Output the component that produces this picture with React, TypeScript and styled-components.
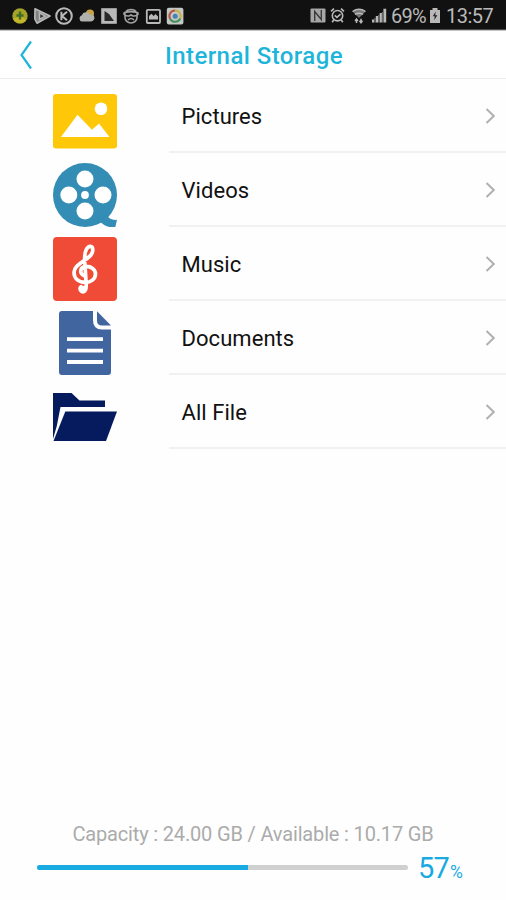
import React from 'react';
import styled, { createGlobalStyle } from 'styled-components';

const GlobalStyle = createGlobalStyle`
  * { box-sizing: border-box; }
  body { margin: 0; background: #fefefe; font-family: Roboto, "Noto Sans", sans-serif; }
  svg { display: block; flex: none; }
`;

const Screen = styled.div`
  width: 506px;
  height: 900px;
  display: flex;
  flex-direction: column;
  background: #fefefe;
  overflow: hidden;
`;

const StatusBar = styled.div`
  height: 30px;
  flex: none;
  display: flex;
  align-items: center;
  justify-content: space-between;
  padding: 2px 13px 0 11px;
  background: #111;
  border-bottom: 1px solid #4a4a4a;
  color: #b9b9b9;
`;

const Notifications = styled.div`
  display: flex;
  gap: 4.2px;
`;

const SystemStatus = styled.div`
  display: flex;
  align-items: center;
`;

const StatusText = styled.span<{ $width: number; $spacing: number }>`
  width: ${(p) => p.$width}px;
  font-size: 20px;
  line-height: 24px;
  letter-spacing: ${(p) => p.$spacing}px;
  white-space: nowrap;
`;

const StatusIcon = styled.span<{ $gap: number }>`
  margin-right: ${(p) => p.$gap}px;
`;

const Header = styled.header`
  height: 49px;
  flex: none;
  display: grid;
  grid-template-columns: 52px 1fr 50px;
  align-items: center;
  border-top: 1px solid #c4c4c4;
  border-bottom: 1px solid #ececec;
  background: #fff;
`;

const BackButton = styled.button`
  border: 0;
  padding: 0 0 0 18px;
  background: none;
`;

const Title = styled.h1`
  margin: 2px 0 0;
  text-align: center;
  font-size: 24px;
  line-height: 28px;
  font-weight: 500;
  letter-spacing: 0.42px;
  color: #1fb5da;
`;

const List = styled.ul`
  margin: 0;
  padding: 0;
  list-style: none;
  flex: 1;
`;

const Row = styled.li`
  display: flex;
  height: 74px;
`;

const Thumb = styled.div`
  width: 169px;
  padding: 10px 0 0 53px;
`;

const RowBody = styled.div`
  flex: 1;
  display: flex;
  align-items: center;
  justify-content: space-between;
  padding: 2px 9px 0 12.5px;
  border-bottom: 2px solid #f1f1f1;
`;

const Label = styled.span`
  padding-top: 2px;
  font-size: 22px;
  line-height: 28px;
  letter-spacing: 0.05px;
  color: #111;
`;

const Footer = styled.footer`
  padding: 0 42px 16px 37px;
`;

const Capacity = styled.p`
  margin: 0 0 4px;
  padding-left: 5px;
  text-align: center;
  font-size: 20px;
  line-height: 24px;
  letter-spacing: -0.16px;
  color: #ababab;
  white-space: nowrap;
`;

const Usage = styled.div`
  display: flex;
  align-items: center;
  height: 34px;
`;

const Track = styled.div`
  width: 371px;
  height: 5px;
  flex: none;
  border-radius: 3px;
  background: #d0d0d0;
  overflow: hidden;
`;

const Fill = styled.div`
  width: 57%;
  height: 100%;
  background: #18abe1;
`;

const Percent = styled.div`
  margin-left: 10px;
  padding-top: 5px;
  display: flex;
  align-items: baseline;
  font-size: 29px;
  font-weight: 400;
  line-height: 34px;
  letter-spacing: -0.8px;
  color: #18abe1;
`;

const PercentSign = styled.span`
  margin-left: 1px;
  font-size: 17.5px;
  font-weight: 400;
`;

const G = '#b9b9b9';

const NotificationIcons = () => (
  <Notifications>
    <svg width="18" height="18" viewBox="0 0 18 18">
      <circle cx="9" cy="9" r="7.7" fill="#a5a32a" />
      <path d="M2 12a7.7 7.7 0 0 0 13 1l-5-4z" fill="#c5b629" />
      <path d="M9 4.5v8M5.5 8.5h7" stroke="#3f6d24" strokeWidth="2.4" />
    </svg>
    <svg width="18" height="18" viewBox="0 0 18 18">
      <path d="M2 1.8 17 9 4 16.2 1.8 12z" fill="#828282" stroke={G} strokeWidth="1.6" strokeLinejoin="round" />
      <path d="m6.5 5.8 5.7 3.4-5.7 3.3z" fill="#333" stroke={G} strokeWidth="1.5" />
    </svg>
    <svg width="18" height="18" viewBox="0 0 18 18" fill="none" stroke={G} strokeWidth="2">
      <circle cx="9" cy="9" r="7.8" />
      <path d="M6.4 4.8v8.4M12 4.8 7 9l5 4.2" />
    </svg>
    <svg width="18" height="18" viewBox="0 0 18 18">
      <circle cx="12" cy="6.5" r="4" fill="#c8a348" />
      <path d="M4 14.4a3.2 3.2 0 0 1-.2-6.2 4.4 4.4 0 0 1 8-.6 3.5 3.5 0 1 1 1.3 6.8z" fill="#b0b0ad" />
    </svg>
    <svg width="18" height="18" viewBox="0 0 18 18">
      <path d="M1.2 1.2h15.6v15.6H1.2z" fill={G} />
      <path d="m4.5 4 4.5 3 2.5 3.5L14 14H4.5z" fill="#2a2a2a" />
    </svg>
    <svg width="18" height="18" viewBox="0 0 18 18" fill="none" stroke="#a2a2a2" strokeWidth="1.6">
      <path d="M4 4.5a5.5 3.5 0 0 1 10 0M1.5 6.5c2-2.5 13-2.5 15 0M3 6.5v4a6 5.5 0 0 0 12 0v-4M1.5 6.5q1.5 3 5.5 2.5L9 8l2 1q4 .5 5.5-2.5M6 13q3-3 6 0" />
    </svg>
    <svg width="18" height="18" viewBox="0 0 18 18">
      <rect x="2.8" y="2.8" width="13.2" height="13.2" rx="1" fill="none" stroke={G} strokeWidth="1.8" />
      <path d="M5 12.6V9l2.4-2.3L9.7 9l1.8-2L14 9.5v3.1z" fill={G} />
    </svg>
    <svg width="18" height="18" viewBox="0 0 18 18">
      <rect x=".8" y=".8" width="16.6" height="16.6" rx="2" fill="#c4c7c5" />
      <g fill="none" strokeWidth="2">
        <path d="M4.2 12A5.6 5.6 0 0 1 9 3.5" stroke="#b95344" />
        <path d="M9 3.5a5.6 5.6 0 0 1 5.2 8" stroke="#c6b144" />
        <path d="M14.2 11.5a5.6 5.6 0 0 1-10 .5" stroke="#45935b" />
      </g>
      <circle cx="9.2" cy="9.2" r="2.5" fill="#4283b4" />
    </svg>
  </Notifications>
);

const PhoneStatus = () => (
  <SystemStatus>
    <StatusIcon $gap={4}>
      <svg width="16" height="17" viewBox="0 0 16 17">
        <rect x=".5" y="1.5" width="15" height="14" rx="1" fill="#a6a6a6" />
        <path d="M4.7 14V4.5l6.6 8V3" fill="none" stroke="#3a3a3a" strokeWidth="1.4" />
      </svg>
    </StatusIcon>
    <StatusIcon $gap={6}>
      <svg width="15" height="17" viewBox="0 0 15 17" fill="none" stroke={G} strokeWidth="1.6">
        <circle cx="7.5" cy="8.7" r="5.2" />
        <path d="m4.8 8.4 2.1 2 3.6-3.3M1 4.3 4 1.6M14 4.3l-3-2.7M3.7 13l-1.5 2.3M11.3 13l1.5 2.3" />
      </svg>
    </StatusIcon>
    <StatusIcon $gap={4}>
      <svg width="16" height="17" viewBox="0 0 16 17">
        <path d="M1.5 4.5Q8 0 14.5 4.5L8 11z" fill="#777" />
        <path d="M1.5 4.5Q8 0 14.5 4.5M4 7.3Q8 5 12 7.3" fill="none" stroke={G} strokeWidth="1.5" />
        <path d="M5.5 16V12M4 13.9l1.5-2 1.5 2M10 11.7v3.6m-1.5-1.6 1.5 2 1.5-2" stroke={G} strokeWidth="1.5" fill="none" />
      </svg>
    </StatusIcon>
    <StatusIcon $gap={4}>
      <svg width="16" height="17" viewBox="0 0 16 17">
        <path d="M1 15.5v-3h2.3v3zM4.8 15.5V9h2.3v6.5zM8.6 15.5V6h2.3v9.5zM12.4 15.5V1.8h2.8v13.7z" fill={G} />
        <path d="M3.3 15.5V11h1.5v4.5zM7.1 15.5V8h1.5v7.5zM10.9 15.5V5h1.5v10.5z" fill="#686868" />
      </svg>
    </StatusIcon>
    <StatusText $width={38} $spacing={-0.75}>69%</StatusText>
    <StatusIcon $gap={5}>
      <svg width="12" height="17" viewBox="0 0 12 17">
        <path d="M3.5 1h5v2H11v13H1V3h2.5z" fill={G} />
        <path d="M6.7 4.5 3.8 9.2h2l-.6 4 3.2-5H6.2z" fill="#222" />
      </svg>
    </StatusIcon>
    <StatusText $width={47} $spacing={-0.5}>13:57</StatusText>
  </SystemStatus>
);

const PictureIcon = () => (
  <svg width="64" height="64" viewBox="0 0 64 64">
    <rect x="0" y="5" width="64" height="54.5" rx="3" fill="#fec809" />
    <circle cx="48" cy="19.8" r="6.3" fill="#fff" />
    <path d="M8 48 24.5 25.8 39 40.8 46 34.5 56.5 48z" fill="#fff" />
  </svg>
);

const VideoIcon = () => (
  <svg width="64" height="64" viewBox="0 0 64 64">
    <circle cx="32" cy="32" r="32" fill="#338db5" />
    <path d="M44 58 54 52q2.5 5.5 10 4.8L62.3 64c-6 1-11-1-14.8-5z" fill="#338db5" />
    <g fill="#fff">
      <circle cx="32" cy="16" r="8.5" />
      <circle cx="15.8" cy="32" r="8.5" />
      <circle cx="50" cy="32" r="8.5" />
      <circle cx="32" cy="48" r="8.5" />
      <circle cx="32" cy="32" r="3.9" />
    </g>
  </svg>
);

const MusicIcon = () => (
  <svg width="64" height="64" viewBox="0 0 64 64">
    <rect width="64" height="64" rx="4" fill="#ef4b36" />
    <path
      d="M30.8 38.5c-4.5-2-4-8.6 1.7-9 5.8-.4 10 3.1 10 7.5 0 5-4.8 8.6-10.3 8.4C25.5 45.2 21 41.5 21 35.2c0-9.5 18.8-12.7 18.8-22 0-5.2-4.2-4.9-6.3-1-2.6 4.8-2.1 10.5-1.5 16l1.2 19.5c.3 6.8-2.5 8-4.8 6.5-1.9-1.3-1.6-3.6-.4-4.5"
      fill="none"
      stroke="#fff"
      strokeWidth="3.7"
      strokeLinecap="round"
      strokeLinejoin="round"
    />
    <circle cx="30" cy="52" r="3.2" fill="#fff" />
  </svg>
);

const DocumentIcon = () => (
  <svg width="64" height="64" viewBox="0 0 64 64">
    <path d="M9 0h31v9.5q0 9 9 9h9V61q0 3-3 3H9q-3 0-3-3V3q0-3 3-3z" fill="#40659f" />
    <path d="M44 .3 58 14.5h-9q-5 0-5-5z" fill="#40659f" />
    <path d="M14 28.2h36M14 39.6h36M14 51h36" stroke="#fff" strokeWidth="3.8" />
  </svg>
);

const FolderIcon = () => (
  <svg width="64" height="64" viewBox="0 0 64 64">
    <path d="M0 8h18.5l8 7.5H52V22H7.5L3.8 41 0 54z" fill="#051b5d" />
    <path d="M12.3 26.5H64L53 56H.5z" fill="#051b5d" />
  </svg>
);

const items = [
  { label: 'Pictures', Icon: PictureIcon },
  { label: 'Videos', Icon: VideoIcon },
  { label: 'Music', Icon: MusicIcon },
  { label: 'Documents', Icon: DocumentIcon },
  { label: 'All File', Icon: FolderIcon },
];

export default function App() {
  return (
    <Screen>
      <GlobalStyle />
      <StatusBar>
        <NotificationIcons />
        <PhoneStatus />
      </StatusBar>
      <Header>
        <BackButton aria-label="Back">
          <svg width="16" height="32" viewBox="0 0 16 32">
            <path d="M13 2.5 3.5 16 13 29.5" fill="none" stroke="#1fb5da" strokeWidth="2.2" />
          </svg>
        </BackButton>
        <Title>Internal Storage</Title>
      </Header>
      <List>
        {items.map(({ label, Icon }) => (
          <Row key={label}>
            <Thumb>
              <Icon />
            </Thumb>
            <RowBody>
              <Label>{label}</Label>
              <svg width="14" height="18" viewBox="0 0 14 18">
                <path d="m3.5 2 7.3 7-7.3 7" fill="none" stroke="#b0b0b0" strokeWidth="2" />
              </svg>
            </RowBody>
          </Row>
        ))}
      </List>
      <Footer>
        <Capacity>Capacity : 24.00 GB / Available : 10.17 GB</Capacity>
        <Usage>
          <Track>
            <Fill />
          </Track>
          <Percent>
            57<PercentSign>%</PercentSign>
          </Percent>
        </Usage>
      </Footer>
    </Screen>
  );
}
